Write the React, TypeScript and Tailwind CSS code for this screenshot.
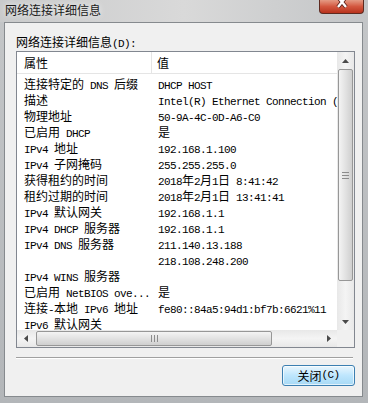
import React from 'react'

type Row = { name: string; value: string }

const rows: Row[] = [
	{ name: '连接特定的 DNS 后缀', value: 'DHCP HOST' },
	{ name: '描述', value: 'Intel(R) Ethernet Connection (2) I219-V' },
	{ name: '物理地址', value: '50-9A-4C-0D-A6-C0' },
	{ name: '已启用 DHCP', value: '是' },
	{ name: 'IPv4 地址', value: '192.168.1.100' },
	{ name: 'IPv4 子网掩码', value: '255.255.255.0' },
	{ name: '获得租约的时间', value: '2018年2月1日 8:41:42' },
	{ name: '租约过期的时间', value: '2018年2月1日 13:41:41' },
	{ name: 'IPv4 默认网关', value: '192.168.1.1' },
	{ name: 'IPv4 DHCP 服务器', value: '192.168.1.1' },
	{ name: 'IPv4 DNS 服务器', value: '211.140.13.188' },
	{ name: '', value: '218.108.248.200' },
	{ name: 'IPv4 WINS 服务器', value: '' },
	{ name: '已启用 NetBIOS ove...', value: '是' },
	{ name: '连接-本地 IPv6 地址', value: 'fe80::84a5:94d1:bf7b:6621%11' },
	{ name: 'IPv6 默认网关', value: '' },
]

// SimSun-like look: CJK full width 12px, latin half width 6px
const Mixed = ({ text }: { text: string }) => (
	<>
		{text.split(/([\u3000-\u9fff]+)/).map((part, i) =>
			/[\u3000-\u9fff]/.test(part) ? (
				<span key={i} className="text-[12px] leading-[14px] font-['Noto_Sans_CJK_SC',sans-serif]">{part}</span>
			) : (
				<span key={i} className="text-[11px] leading-[14px] tracking-[-0.6px] font-['Liberation_Mono',monospace]">{part}</span>
			)
		)}
	</>
)

const Arrow = ({ dir }: { dir: 'up' | 'down' | 'left' | 'right' }) => {
	const pts = {
		up: '0,4 7,4 3.5,0',
		down: '0,0 7,0 3.5,4',
		left: '4,0 4,7 0,3.5',
		right: '0,0 0,7 4,3.5',
	}[dir]
	const vertical = dir === 'up' || dir === 'down'
	return (
		<svg width={vertical ? 7 : 4} height={vertical ? 4 : 7} viewBox={vertical ? '0 0 7 4' : '0 0 4 7'}>
			<polygon points={pts} fill="#4a4a4a" />
		</svg>
	)
}

export default function App() {
	return (
		<div className="w-[368px] h-[403px] flex flex-col bg-gradient-to-b from-[#c4c6c8] to-[#b3b6b9] overflow-hidden font-['Noto_Sans_CJK_SC',sans-serif] text-black">
			{/* title bar */}
			<div className="h-[22px] shrink-0 flex items-start justify-between pl-[5px] pr-[4px] bg-gradient-to-r from-[#c9cacb] via-[#d9d9d9] to-[#c3c5c7]">
				<span className="mt-[2px] text-[12px] leading-[16px] text-[#1a1a1a] [text-shadow:0_0_6px_#ffffff]">网络连接详细信息</span>
				<div className="w-[45px] h-[14px] rounded-b-[4px] border border-t-0 border-[#5e2a20] bg-gradient-to-b from-[#e49a84] via-[#d3573f] to-[#b8321c] flex justify-center overflow-hidden">
					<svg width="14" height="10" viewBox="0 0 14 10">
						<path d="M3 -3 L11 7 M11 -3 L3 7" stroke="#5a2018" strokeWidth="4" />
						<path d="M3 -3 L11 7 M11 -3 L3 7" stroke="#ffffff" strokeWidth="2.4" />
					</svg>
				</div>
			</div>

			<div className="flex-1 min-h-0 flex pl-[4px] pr-[5px] pb-[6px]">
				<div className="flex-1 min-w-0 flex flex-col border border-[#868a8e] bg-[#f0f0f0] pt-[9px] pl-[11px] pr-[7px]">
					<div className="h-[16px] leading-[16px] whitespace-pre">
						<span className="text-[12px]">网络连接详细信息</span>
						<span className="text-[11px] font-['Liberation_Mono',monospace] tracking-[-0.6px]">(D):</span>
					</div>

					{/* list view */}
					<div className="mt-[3px] h-[297px] shrink-0 border border-[#828790] bg-white flex flex-col">
						<div className="flex-1 flex min-h-0">
							<div className="flex-1 min-w-0 flex flex-col overflow-hidden">
								<div className="h-[22px] shrink-0 flex border-b border-[#e5e5e5] text-[12px]">
									<div className="w-[135px] shrink-0 pl-[7px] flex items-center border-r border-[#e5e5e5]">属性</div>
									<div className="pl-[5px] flex items-center">值</div>
								</div>
								<div className="pt-[2px] flex flex-col">
									{rows.map((r, i) => (
										<div key={i} className="h-[16px] shrink-0 flex items-center whitespace-pre">
											<div className="w-[135px] shrink-0 pl-[7px] leading-[14px]">
												<Mixed text={r.name} />
											</div>
											<div className="pl-[6px] leading-[14px]">
												<Mixed text={r.value} />
											</div>
										</div>
									))}
								</div>
							</div>

							{/* vertical scrollbar */}
							<div className="w-[17px] shrink-0 flex flex-col bg-gradient-to-r from-[#e8e8e8] via-[#f4f4f4] to-[#e8e8e8]">
								<div className="h-[17px] shrink-0 flex items-center justify-center">
									<Arrow dir="up" />
								</div>
								<div className="flex-1 flex flex-col">
									<div className="h-[212px] mx-[1px] rounded-[2px] border border-[#979797] bg-gradient-to-r from-[#f4f4f4] via-[#e2e2e2] to-[#cfcfcf] flex flex-col items-center justify-center gap-[2px]">
										<div className="w-[7px] h-[1px] bg-[#8c8c8c]" />
										<div className="w-[7px] h-[1px] bg-[#8c8c8c]" />
										<div className="w-[7px] h-[1px] bg-[#8c8c8c]" />
									</div>
								</div>
								<div className="h-[17px] shrink-0 flex items-center justify-center">
									<Arrow dir="down" />
								</div>
							</div>
						</div>

						{/* horizontal scrollbar */}
						<div className="h-[17px] shrink-0 flex bg-gradient-to-b from-[#e8e8e8] via-[#f4f4f4] to-[#e8e8e8]">
							<div className="w-[17px] shrink-0 flex items-center justify-center">
								<Arrow dir="left" />
							</div>
							<div className="flex-1 min-w-0 flex items-center pl-[2px]">
								<div className="w-[236px] h-[15px] rounded-[2px] border border-[#979797] bg-gradient-to-b from-[#f4f4f4] via-[#e2e2e2] to-[#cfcfcf] flex items-center justify-center gap-[2px]">
									<div className="w-[1px] h-[7px] bg-[#8c8c8c]" />
									<div className="w-[1px] h-[7px] bg-[#8c8c8c]" />
									<div className="w-[1px] h-[7px] bg-[#8c8c8c]" />
								</div>
							</div>
							<div className="w-[17px] shrink-0 flex items-center justify-center">
								<Arrow dir="right" />
							</div>
							<div className="w-[17px] shrink-0 bg-[#f0f0f0]" />
						</div>
					</div>

					{/* separator */}
					<div className="mt-[9px] mr-[2px] h-[2px] border-t border-[#a0a0a0] border-b border-b-white" />

					<button className="mt-[6px] self-end w-[73px] h-[21px] rounded-[3px] border border-[#3c7fb1] bg-gradient-to-b from-[#eaf6fd] via-[#bee6fd] to-[#a7d9f5] flex items-center justify-center whitespace-pre shadow-[inset_0_0_0_1px_#ffffffaa]">
						<span className="text-[12px]">关闭</span>
						<span className="text-[11px] font-['Liberation_Mono',monospace] tracking-[-0.6px]">(C)</span>
					</button>
				</div>
			</div>
		</div>
	)
}
